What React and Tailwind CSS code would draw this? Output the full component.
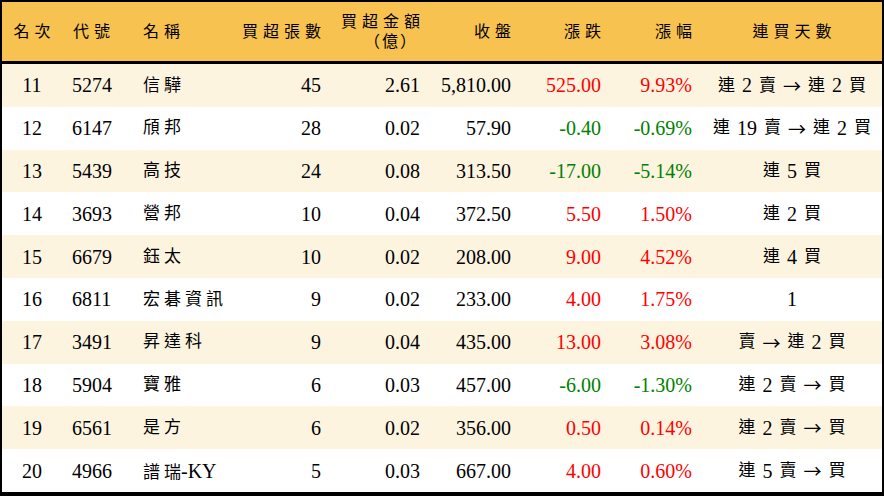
const rows = [
    ["11", "5274", "信驊", "45", "2.61", "5,810.00", "525.00", "9.93%", "連 2 賣 → 連 2 買", "up"],
    ["12", "6147", "頎邦", "28", "0.02", "57.90", "-0.40", "-0.69%", "連 19 賣 → 連 2 買", "down"],
    ["13", "5439", "高技", "24", "0.08", "313.50", "-17.00", "-5.14%", "連 5 買", "down"],
    ["14", "3693", "營邦", "10", "0.04", "372.50", "5.50", "1.50%", "連 2 買", "up"],
    ["15", "6679", "鈺太", "10", "0.02", "208.00", "9.00", "4.52%", "連 4 買", "up"],
    ["16", "6811", "宏碁資訊", "9", "0.02", "233.00", "4.00", "1.75%", "1", "up"],
    ["17", "3491", "昇達科", "9", "0.04", "435.00", "13.00", "3.08%", "賣 → 連 2 買", "up"],
    ["18", "5904", "寶雅", "6", "0.03", "457.00", "-6.00", "-1.30%", "連 2 賣 → 買", "down"],
    ["19", "6561", "是方", "6", "0.02", "356.00", "0.50", "0.14%", "連 2 賣 → 買", "up"],
    ["20", "4966", "譜瑞-KY", "5", "0.03", "667.00", "4.00", "0.60%", "連 5 賣 → 買", "up"],
];

const cols = "grid grid-cols-[60px_71px_97px_101px_99px_91px_90px_91px_180px]";

const Label = ({ children }) => (
    <span className="tracking-[5px] mr-[-5px]">{children}</span>
);

const Days = ({ text }) => (
    <div className="flex justify-center items-center gap-[7px]">
        {text.split(" ").map((t, i) =>
            t === "→" ? (
                <span key={i} className="font-['Noto_Sans_CJK_TC'] text-[18px]">→</span>
            ) : /\d/.test(t) ? (
                <span key={i} className="text-[20px]">{t}</span>
            ) : (
                <span key={i} className="text-[17px]">{t}</span>
            )
        )}
    </div>
);

const Name = ({ text }) => {
    if (text.includes("-")) {
        const [cjk, rest] = text.split("-");
        return (
            <>
                <span className="tracking-[4px]">{cjk.slice(0, -1)}</span>
                {cjk.slice(-1)}
                <span className="text-[20px]">-{rest}</span>
            </>
        );
    }
    return <span className="tracking-[4px]">{text}</span>;
};

const App = () => {
    return (
        <div className="w-[884px] h-[496px] border-black border-t-2 border-x-2 border-b-4 bg-white text-black font-['Liberation_Serif','Noto_Sans_CJK_TC',serif]">
            <div className={`${cols} h-[62px] bg-[#f8c250] border-b-[3px] border-black text-[16px] items-center`}>
                <div className="text-center"><Label>名次</Label></div>
                <div className="pl-[11px]"><Label>代號</Label></div>
                <div className="pl-[10px]"><Label>名稱</Label></div>
                <div className="text-right pr-[10px]"><Label>買超張數</Label></div>
                <div className="text-right pr-[10px] leading-[20px]">
                    <div><Label>買超金額</Label></div>
                    <div className="pr-[2px] tracking-[2px]">（億）</div>
                </div>
                <div className="text-right pr-[10px]"><Label>收盤</Label></div>
                <div className="text-right pr-[10px]"><Label>漲跌</Label></div>
                <div className="text-right pr-[10px]"><Label>漲幅</Label></div>
                <div className="text-center"><Label>連買天數</Label></div>
            </div>
            {rows.map((r, i) => {
                const color = r[9] === "up" ? "text-[#ff0000]" : "text-[#008000]";
                return (
                    <div
                        key={r[0]}
                        className={`${cols} h-[42.8px] items-center text-[20px] ${i % 2 === 0 ? "bg-[#fdf4e0]" : "bg-white"}`}
                    >
                        <div className="text-center">{r[0]}</div>
                        <div className="pl-[10px]">{r[1]}</div>
                        <div className="pl-[10px] text-[17px]">
                            <Name text={r[2]} />
                        </div>
                        <div className="text-right pr-[10px]">{r[3]}</div>
                        <div className="text-right pr-[10px]">{r[4]}</div>
                        <div className="text-right pr-[10px]">{r[5]}</div>
                        <div className={`text-right pr-[10px] ${color}`}>{r[6]}</div>
                        <div className={`text-right pr-[10px] ${color}`}>{r[7]}</div>
                        <Days text={r[8]} />
                    </div>
                );
            })}
        </div>
    );
};

export default App;
